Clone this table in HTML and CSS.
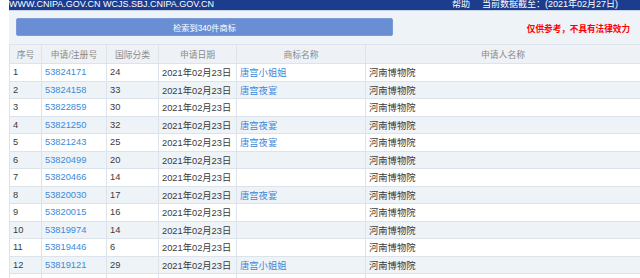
FILE: index.html
```html
<!DOCTYPE html>
<html lang="zh-CN">
<head>
<meta charset="utf-8">
<title>商标检索</title>
<link rel="stylesheet" href="styles.css">
</head>
<body>
<div class="page">
  <div class="topbar">
    <span class="site">WWW.CNIPA.GOV.CN WCJS.SBJ.CNIPA.GOV.CN</span>
    <span class="meta"><span class="help">帮助</span><span>当前数据截至：(2021年02月27日)</span></span>
  </div>
  <div class="toolbar">
    <div class="result-btn">检索到340件商标</div>
    <div class="notice">仅供参考，不具有法律效力</div>
  </div>
  <table class="grid">
    <colgroup>
      <col class="c1"><col class="c2"><col class="c3"><col class="c4"><col class="c5"><col class="c6">
    </colgroup>
    <thead>
      <tr><th>序号</th><th>申请/注册号</th><th>国际分类</th><th>申请日期</th><th>商标名称</th><th>申请人名称</th></tr>
    </thead>
    <tbody>
      <tr><td>1</td><td><a>53824171</a></td><td>24</td><td>2021年02月23日</td><td><a>唐宫小姐姐</a></td><td>河南博物院</td></tr>
      <tr><td>2</td><td><a>53824158</a></td><td>33</td><td>2021年02月23日</td><td><a>唐宫夜宴</a></td><td>河南博物院</td></tr>
      <tr><td>3</td><td><a>53822859</a></td><td>30</td><td>2021年02月23日</td><td></td><td>河南博物院</td></tr>
      <tr><td>4</td><td><a>53821250</a></td><td>32</td><td>2021年02月23日</td><td><a>唐宫夜宴</a></td><td>河南博物院</td></tr>
      <tr><td>5</td><td><a>53821243</a></td><td>25</td><td>2021年02月23日</td><td><a>唐宫夜宴</a></td><td>河南博物院</td></tr>
      <tr><td>6</td><td><a>53820499</a></td><td>20</td><td>2021年02月23日</td><td></td><td>河南博物院</td></tr>
      <tr><td>7</td><td><a>53820466</a></td><td>14</td><td>2021年02月23日</td><td></td><td>河南博物院</td></tr>
      <tr><td>8</td><td><a>53820030</a></td><td>17</td><td>2021年02月23日</td><td><a>唐宫夜宴</a></td><td>河南博物院</td></tr>
      <tr><td>9</td><td><a>53820015</a></td><td>16</td><td>2021年02月23日</td><td></td><td>河南博物院</td></tr>
      <tr><td>10</td><td><a>53819974</a></td><td>14</td><td>2021年02月23日</td><td></td><td>河南博物院</td></tr>
      <tr><td>11</td><td><a>53819446</a></td><td>6</td><td>2021年02月23日</td><td></td><td>河南博物院</td></tr>
      <tr><td>12</td><td><a>53819121</a></td><td>29</td><td>2021年02月23日</td><td><a>唐宫小姐姐</a></td><td>河南博物院</td></tr>
      <tr><td></td><td></td><td></td><td></td><td></td><td></td></tr>
    </tbody>
  </table>
</div>
</body>
</html>
```
FILE: styles.css
```css
html, body {
  margin: 0;
  padding: 0;
  background: #ffffff;
  overflow: hidden;
}
body {
  font-family: "Liberation Sans", "Noto Sans CJK SC", sans-serif;
  color: #333333;
}
.page {
  margin-left: 9px;
}
.topbar {
  height: 10px;
  background: #1c3c8e;
  border-bottom: 1px solid #c9d4e4;
  color: #ffffff;
  font-size: 9px;
  line-height: 8px;
  display: flex;
  justify-content: space-between;
  overflow: hidden;
  white-space: nowrap;
}
.meta {
  padding-right: 22px;
}
.help {
  margin-right: 12px;
}
.toolbar {
  height: 33px;
  background: #eef3f8;
  display: flex;
  align-items: center;
  justify-content: space-between;
  padding: 0 10px 0 7px;
  box-sizing: border-box;
}
.result-btn {
  width: 377px;
  height: 18px;
  margin-bottom: 1px;
  box-sizing: border-box;
  background: #6a8ed3;
  border: 1px solid #7b9bd8;
  border-radius: 2px;
  color: #ffffff;
  font-size: 8.2px;
  display: flex;
  align-items: center;
  justify-content: center;
}
.notice {
  color: #ff0000;
  font-weight: bold;
  font-size: 8.6px;
  margin-top: 1px;
}
.grid {
  border-collapse: collapse;
  table-layout: fixed;
  width: 631px;
}
.c1 { width: 32px; }
.c2 { width: 65px; }
.c3 { width: 52px; }
.c4 { width: 78px; }
.c5 { width: 129px; }
.c6 { width: 275px; }
.grid th, .grid td {
  border: 1px solid #dde3ea;
  padding: 0 0 0 3px;
  white-space: nowrap;
  overflow: hidden;
  vertical-align: middle;
}
.grid th {
  height: 18px;
  background: #eef2f6;
  color: #8a8a8a;
  font-weight: normal;
  font-size: 8.8px;
  text-align: center;
  padding: 0;
}
.grid td {
  height: 17.5px;
  box-sizing: border-box;
  font-size: 9.3px;
  color: #3a3a3a;
  text-align: left;
}
.grid tbody tr:nth-child(even) td {
  background: #eef3f8;
}
.grid a {
  color: #3b8ad8;
  text-decoration: none;
}
```
